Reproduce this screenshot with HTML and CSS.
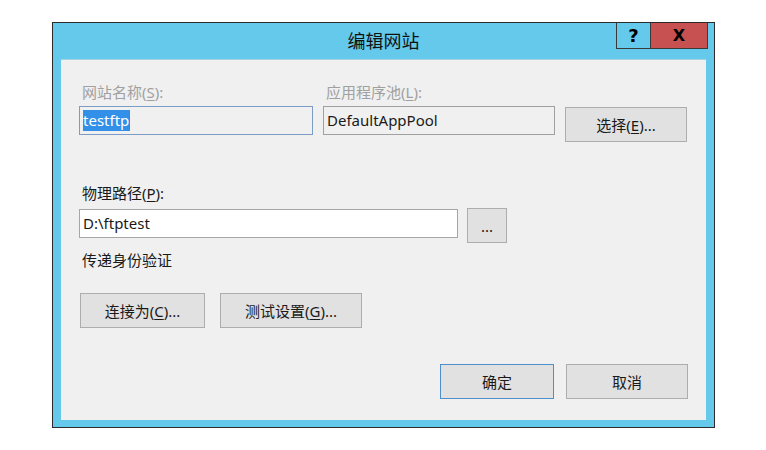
FILE: index.html
```html
<!DOCTYPE html>
<html lang="zh-CN">
<head>
    <meta charset="UTF-8">
    <title>编辑网站</title>
    <link rel="stylesheet" href="styles.css">
</head>
<body>

    <div class="window">
        <div class="titlebar">
            <span class="title">编辑网站</span>
            <div class="controls">
                <div class="ctl help">?</div>
                <div class="ctl close">X</div>
            </div>
        </div>
        <div class="client">
            <div class="top-grid">
                <div class="label disabled">网站名称(<u>S</u>):</div>
                <div class="label disabled">应用程序池(<u>L</u>):</div>
                <div></div>
                <div class="textbox focused"><span class="sel">testftp</span><span class="caret"></span></div>
                <div class="textbox readonly">DefaultAppPool</div>
                <button class="btn select">选择(<u>E</u>)...</button>
            </div>

            <div class="label path-label">物理路径(<u>P</u>):</div>
            <div class="path-row">
                <div class="textbox path">D:\ftptest</div>
                <button class="btn browse">...</button>
            </div>

            <div class="label auth-label">传递身份验证</div>
            <div class="auth-row">
                <button class="btn connect">连接为(<u>C</u>)...</button>
                <button class="btn test">测试设置(<u>G</u>)...</button>
            </div>

            <div class="footer">
                <button class="btn ok">确定</button>
                <button class="btn cancel">取消</button>
            </div>
        </div>
    </div>

</body>
</html>
```

FILE: styles.css
```css
body {
    margin: 0;
    background-color: #ffffff;
    font-family: "Segoe UI", "Noto Sans", "Noto Sans CJK SC", sans-serif;
    font-size: 15px;
    color: #1a1a1a;
}
.window {
    margin: 22px 0 0 52px;
    width: 663px;
    height: 406px;
    box-sizing: border-box;
    border: 1px solid #2b2b2b;
    background-color: #64c9eb;
    padding: 0 8px 7px 8px;
    display: flex;
    flex-direction: column;
}
.titlebar {
    position: relative;
    height: 36px;
    flex: none;
}
.title {
    display: block;
    text-align: center;
    font-family: "Noto Sans CJK SC", sans-serif;
    font-size: 18px;
    line-height: 34px;
    color: #111;
}
.controls {
    position: absolute;
    top: 0;
    right: -2px;
    display: flex;
    border: 1px solid #3a3a3a;
    border-top: none;
}
.ctl {
    height: 25px;
    line-height: 25px;
    text-align: center;
    font-family: "DejaVu Sans", sans-serif;
    font-weight: bold;
    color: #000;
}
.help {
    width: 33px;
    font-size: 18px;
    border-right: 1px solid #3a3a3a;
}
.close {
    width: 56px;
    font-size: 16px;
    background-color: #c75050;
}
.client {
    flex: 1;
    background-color: #f0f0f0;
    border-top: 1px solid #a9cfe0;
    padding: 22px 18px 0 18px;
}
.label {
    line-height: 20px;
    height: 20px;
    padding-left: 3px;
    font-family: "Segoe UI", "Noto Sans", "Noto Sans CJK SC", sans-serif;
}
.disabled {
    color: #a0a0a0;
}
u {
    text-underline-offset: 2px;
}
.top-grid {
    display: grid;
    grid-template-columns: 234px 232px 122px;
    grid-template-rows: 20px auto;
    column-gap: 10px;
    row-gap: 4px;
}
.textbox {
    box-sizing: border-box;
    height: 29px;
    line-height: 27px;
    padding-left: 3px;
    border: 1px solid #a0a0a0;
    background-color: #f0f0f0;
    display: flex;
    align-items: center;
}
.focused {
    border-color: #7a9cc6;
}
.sel {
    background-color: #3390e8;
    color: #fff;
    line-height: 21px;
}
.caret {
    width: 1px;
    height: 21px;
    background-color: #b06a2a;
}
.btn {
    box-sizing: border-box;
    height: 35px;
    border: 1px solid #adadad;
    background-color: #e1e1e1;
    font-family: "Segoe UI", "Noto Sans", "Noto Sans CJK SC", sans-serif;
    font-size: 15px;
    color: #1a1a1a;
    padding: 0;
    cursor: pointer;
}
.select {
    margin-top: 1px;
}
.path-label {
    margin-top: 41px;
}
.path-row {
    display: flex;
    gap: 9px;
    margin-top: 5px;
}
.path {
    width: 379px;
    margin-top: 1px;
    background-color: #ffffff;
    border-color: #a6a6a6;
}
.browse {
    width: 40px;
}
.auth-label {
    margin-top: 7px;
}
.auth-row {
    display: flex;
    gap: 15px;
    margin-top: 23px;
    padding-left: 1px;
}
.connect {
    width: 125px;
}
.test {
    width: 142px;
}
.footer {
    display: flex;
    justify-content: flex-end;
    gap: 12px;
    margin-top: 36px;
}
.ok {
    width: 114px;
    border-color: #4f8fca;
}
.cancel {
    width: 122px;
}
```
